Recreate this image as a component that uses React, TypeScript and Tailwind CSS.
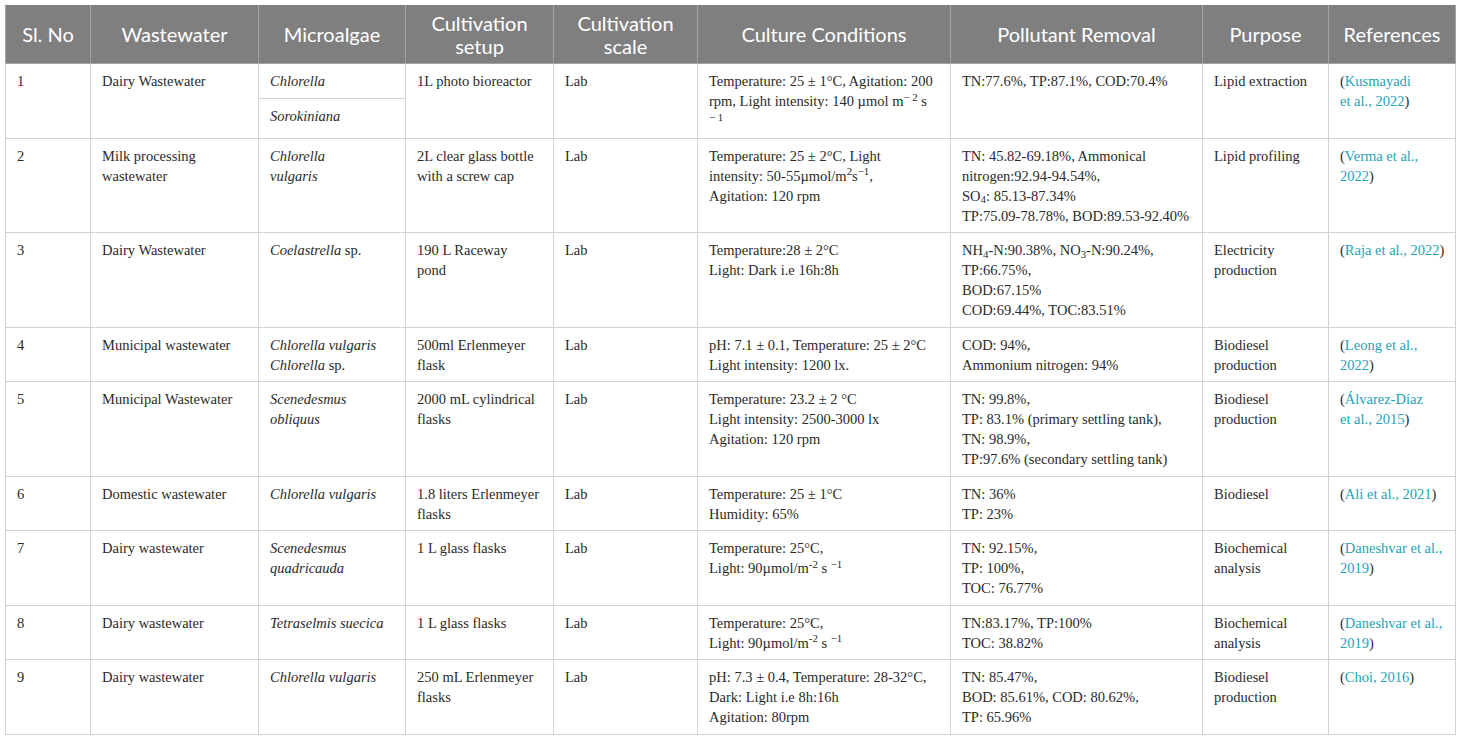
import React from "react";

type Row = {
  no: string;
  water: React.ReactNode;
  algae: React.ReactNode;
  setup: React.ReactNode;
  scale: string;
  cond: React.ReactNode;
  removal: React.ReactNode;
  purpose: React.ReactNode;
  ref: React.ReactNode;
};

const Ref = ({ a, b }: { a: string; b?: string }) => (
  <>
    (<span className="text-[#1fa3b6]">{a}</span>
    {b && (
      <>
        <br />
        <span className="text-[#1fa3b6]">{b}</span>
      </>
    )}
    )
  </>
);

const rows: Row[] = [
  {
    no: "2",
    water: <>Milk processing<br />wastewater</>,
    algae: <i>Chlorella<br />vulgaris</i>,
    setup: <>2L clear glass bottle<br />with a screw cap</>,
    scale: "Lab",
    cond: (
      <>
        Temperature: 25 ± 2°C, Light
        <br />
        intensity: 50-55µmol/m<sup>2</sup>s<sup>−1</sup>,
        <br />
        Agitation: 120 rpm
      </>
    ),
    removal: (
      <>
        TN: 45.82-69.18%, Ammonical
        <br />
        nitrogen:92.94-94.54%,
        <br />
        SO<sub>4</sub>: 85.13-87.34%
        <br />
        TP:75.09-78.78%, BOD:89.53-92.40%
      </>
    ),
    purpose: "Lipid profiling",
    ref: <Ref a="Verma et al.," b="2022" />,
  },
  {
    no: "3",
    water: "Dairy Wastewater",
    algae: <><i>Coelastrella</i> sp.</>,
    setup: <>190 L Raceway<br />pond</>,
    scale: "Lab",
    cond: <>Temperature:28 ± 2°C<br />Light: Dark i.e 16h:8h</>,
    removal: (
      <>
        NH<sub>4</sub>-N:90.38%, NO<sub>3</sub>-N:90.24%,
        <br />
        TP:66.75%,
        <br />
        BOD:67.15%
        <br />
        COD:69.44%, TOC:83.51%
      </>
    ),
    purpose: <>Electricity<br />production</>,
    ref: <Ref a="Raja et al., 2022" />,
  },
  {
    no: "4",
    water: "Municipal wastewater",
    algae: <><i>Chlorella vulgaris</i><br /><i>Chlorella</i> sp.</>,
    setup: <>500ml Erlenmeyer<br />flask</>,
    scale: "Lab",
    cond: <>pH: 7.1 ± 0.1, Temperature: 25 ± 2°C<br />Light intensity: 1200 lx.</>,
    removal: <>COD: 94%,<br />Ammonium nitrogen: 94%</>,
    purpose: <>Biodiesel<br />production</>,
    ref: <Ref a="Leong et al.," b="2022" />,
  },
  {
    no: "5",
    water: "Municipal Wastewater",
    algae: <i>Scenedesmus<br />obliquus</i>,
    setup: <>2000 mL cylindrical<br />flasks</>,
    scale: "Lab",
    cond: <>Temperature: 23.2 ± 2 °C<br />Light intensity: 2500-3000 lx<br />Agitation: 120 rpm</>,
    removal: (
      <>
        TN: 99.8%,
        <br />
        TP: 83.1% (primary settling tank),
        <br />
        TN: 98.9%,
        <br />
        TP:97.6% (secondary settling tank)
      </>
    ),
    purpose: <>Biodiesel<br />production</>,
    ref: <Ref a="Álvarez-Díaz" b="et al., 2015" />,
  },
  {
    no: "6",
    water: "Domestic wastewater",
    algae: <i>Chlorella vulgaris</i>,
    setup: <>1.8 liters Erlenmeyer<br />flasks</>,
    scale: "Lab",
    cond: <>Temperature: 25 ± 1°C<br />Humidity: 65%</>,
    removal: <>TN: 36%<br />TP: 23%</>,
    purpose: "Biodiesel",
    ref: <Ref a="Ali et al., 2021" />,
  },
  {
    no: "7",
    water: "Dairy wastewater",
    algae: <i>Scenedesmus<br />quadricauda</i>,
    setup: "1 L glass flasks",
    scale: "Lab",
    cond: <>Temperature: 25°C,<br />Light: 90µmol/m<sup>-2</sup> s <sup>−1</sup></>,
    removal: <>TN: 92.15%,<br />TP: 100%,<br />TOC: 76.77%</>,
    purpose: <>Biochemical<br />analysis</>,
    ref: <Ref a="Daneshvar et al.," b="2019" />,
  },
  {
    no: "8",
    water: "Dairy wastewater",
    algae: <i>Tetraselmis suecica</i>,
    setup: "1 L glass flasks",
    scale: "Lab",
    cond: <>Temperature: 25°C,<br />Light: 90µmol/m<sup>-2</sup> s <sup>−1</sup></>,
    removal: <>TN:83.17%, TP:100%<br />TOC: 38.82%</>,
    purpose: <>Biochemical<br />analysis</>,
    ref: <Ref a="Daneshvar et al.," b="2019" />,
  },
  {
    no: "9",
    water: "Dairy wastewater",
    algae: <i>Chlorella vulgaris</i>,
    setup: <>250 mL Erlenmeyer<br />flasks</>,
    scale: "Lab",
    cond: <>pH: 7.3 ± 0.4, Temperature: 28-32°C,<br />Dark: Light i.e 8h:16h<br />Agitation: 80rpm</>,
    removal: <>TN: 85.47%,<br />BOD: 85.61%, COD: 80.62%,<br />TP: 65.96%</>,
    purpose: <>Biodiesel<br />production</>,
    ref: <Ref a="Choi, 2016" />,
  },
];

const widths = [85, 168, 147, 148, 144, 253, 252, 126, 127];
const heads: React.ReactNode[] = [
  "Sl. No",
  "Wastewater",
  "Microalgae",
  <>Cultivation<br />setup</>,
  <>Cultivation<br />scale</>,
  "Culture Conditions",
  "Pollutant Removal",
  "Purpose",
  "References",
];

const td = "border border-[#d2d2d2] px-[11px] pt-[7px] pb-[6.5px] align-top whitespace-nowrap";

export default function App() {
  return (
    <div className="bg-white p-[5px] min-h-screen">
      <table className="table-fixed border-collapse w-[1450px] text-[14.5px] leading-[20px] text-[#2a2a2a] font-['Liberation_Serif','Times_New_Roman',serif]">
        <colgroup>
          {widths.map((w, i) => (
            <col key={i} style={{ width: w }} />
          ))}
        </colgroup>
        <thead>
          <tr className="bg-[#7f7f7f] text-white">
            {heads.map((h, i) => (
              <th
                key={i}
                className="border border-[#a3a3a3] border-t-[#7f7f7f] px-2 py-[5.5px] text-center align-middle font-normal text-[20px] leading-[23px] font-[Lato,sans-serif]"
              >
                {h}
              </th>
            ))}
          </tr>
        </thead>
        <tbody>
          <tr className="h-[35px]">
            <td rowSpan={2} className={td}>1</td>
            <td rowSpan={2} className={td}>Dairy Wastewater</td>
            <td className={td}><i>Chlorella</i></td>
            <td rowSpan={2} className={td}>1L photo bioreactor</td>
            <td rowSpan={2} className={td}>Lab</td>
            <td rowSpan={2} className={td}>
              Temperature: 25 ± 1°C, Agitation: 200
              <br />
              rpm, Light intensity: 140 µmol m<sup>− 2</sup> s
              <br />
              <sup>− 1</sup>
            </td>
            <td rowSpan={2} className={td}>TN:77.6%, TP:87.1%, COD:70.4%</td>
            <td rowSpan={2} className={td}>Lipid extraction</td>
            <td rowSpan={2} className={td}>
              <Ref a="Kusmayadi" b="et al., 2022" />
            </td>
          </tr>
          <tr>
            <td className={td}><i>Sorokiniana</i></td>
          </tr>
          {rows.map((r) => (
            <tr key={r.no}>
              <td className={td}>{r.no}</td>
              <td className={td}>{r.water}</td>
              <td className={td}>{r.algae}</td>
              <td className={td}>{r.setup}</td>
              <td className={td}>{r.scale}</td>
              <td className={td}>{r.cond}</td>
              <td className={td}>{r.removal}</td>
              <td className={td}>{r.purpose}</td>
              <td className={td}>{r.ref}</td>
            </tr>
          ))}
        </tbody>
      </table>
    </div>
  );
}
